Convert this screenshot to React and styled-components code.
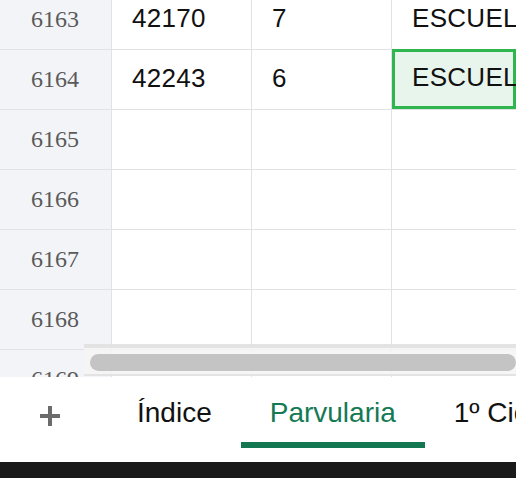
import styled, { createGlobalStyle } from "styled-components";

const GlobalStyle = createGlobalStyle`
  * { box-sizing: border-box; }
  html, body { margin: 0; padding: 0; background: #ffffff; }
  body { font-family: "Liberation Sans", Arial, sans-serif; }
`;

const rows = [
  { num: 6163, cells: ["42170", "7", "ESCUELA"] },
  { num: 6164, cells: ["42243", "6", "ESCUELA"], selected: 2 },
  { num: 6165, cells: ["", "", ""] },
  { num: 6166, cells: ["", "", ""] },
  { num: 6167, cells: ["", "", ""] },
  { num: 6168, cells: ["", "", ""] },
  { num: 6169, cells: ["", "", ""] },
];

const tabs = [
  { name: "Índice" },
  { name: "Parvularia", active: true },
  { name: "1º Ciclo" },
];

const App = () => {
  return (
    <Frame>
      <GlobalStyle />
      <Viewport>
        <Grid>
          {rows.map((row) => (
            <Row key={row.num}>
              <RowHeader>{row.num}</RowHeader>
              {row.cells.map((text, i) => (
                <Cell key={i} $selected={row.selected === i} $last={i === 2}>
                  {text}
                </Cell>
              ))}
            </Row>
          ))}
        </Grid>
        <ScrollTrack>
          <ScrollThumb />
        </ScrollTrack>
      </Viewport>
      <TabBar>
        <AddButton>
          <PlusIcon width="20" height="20" viewBox="0 0 20 20">
            <rect x="0" y="8" width="20" height="4" fill="#6b6b6b" />
            <rect x="8" y="0" width="4" height="20" fill="#6b6b6b" />
          </PlusIcon>
        </AddButton>
        {tabs.map((tab) => (
          <Tab key={tab.name} $active={tab.active}>
            {tab.name}
          </Tab>
        ))}
      </TabBar>
      <SystemBar />
    </Frame>
  );
};

export default App;

const Frame = styled.div`
  display: flex;
  flex-direction: column;
  width: 516px;
  height: 478px;
  overflow: hidden;
  background: #ffffff;
`;

const Viewport = styled.div`
  position: relative;
  height: 377px;
  overflow: hidden;
  flex-shrink: 0;
`;

const Grid = styled.div`
  display: flex;
  flex-direction: column;
  margin-top: -10px;
`;

const Row = styled.div`
  display: grid;
  grid-template-columns: 112px 140px 140px 1fr;
  height: 60px;
`;

const RowHeader = styled.div`
  display: flex;
  align-items: center;
  justify-content: center;
  background: #f3f4f8;
  border-right: 1px solid #e2e2e4;
  border-bottom: 1px solid #e2e2e4;
  font-family: "Liberation Serif", "Times New Roman", serif;
  font-size: 24px;
  color: #5a5a5a;
  padding-right: 1px;
`;

const Cell = styled.div`
  display: flex;
  align-items: center;
  padding-left: 20px;
  padding-bottom: 3px;
  white-space: nowrap;
  overflow: hidden;
  font-size: 26px;
  letter-spacing: 0.3px;
  color: #111111;
  border-right: ${(p) => (p.$last ? "none" : "1px solid #e2e2e4")};
  border-bottom: 1px solid #e2e2e4;
  background: ${(p) => (p.$selected ? "#e8f5ec" : "#ffffff")};
  box-shadow: ${(p) => (p.$selected ? "inset 0 0 0 3px #2fb64f" : "none")};
  margin: ${(p) => (p.$selected ? "-1px 0 0 0" : "0")};
  height: ${(p) => (p.$selected ? "61px" : "auto")};
`;

const ScrollTrack = styled.div`
  position: absolute;
  left: 84px;
  right: 0;
  bottom: 1px;
  height: 32px;
  background: rgba(245, 245, 245, 0.85);
  border-top: 4px solid rgba(225, 225, 225, 0.9);
  border-bottom: 2px solid rgba(225, 225, 225, 0.9);
  padding: 6px 0 0 6px;
`;

const ScrollThumb = styled.div`
  height: 17px;
  border-radius: 9px;
  background: #c4c4c4;
  width: 100%;
`;

const TabBar = styled.div`
  display: flex;
  align-items: stretch;
  height: 85px;
  background: #ffffff;
  flex-shrink: 0;
  overflow: hidden;
`;

const AddButton = styled.div`
  display: flex;
  align-items: center;
  justify-content: center;
  flex-shrink: 0;
  width: 108px;
  padding-right: 8px;
  padding-bottom: 8px;
`;

const PlusIcon = styled.svg`
  display: block;
`;

const Tab = styled.div`
  position: relative;
  display: flex;
  align-items: center;
  flex-shrink: 0;
  padding: 0 29px 14px;
  font-size: 28px;
  white-space: nowrap;
  color: ${(p) => (p.$active ? "#147a54" : "#111111")};

  &::after {
    content: "";
    position: absolute;
    left: 0;
    right: 0;
    bottom: 14px;
    height: 6px;
    background: ${(p) => (p.$active ? "#137852" : "transparent")};
  }
`;

const SystemBar = styled.div`
  height: 16px;
  background: #1a1a1a;
  flex-shrink: 0;
`;
